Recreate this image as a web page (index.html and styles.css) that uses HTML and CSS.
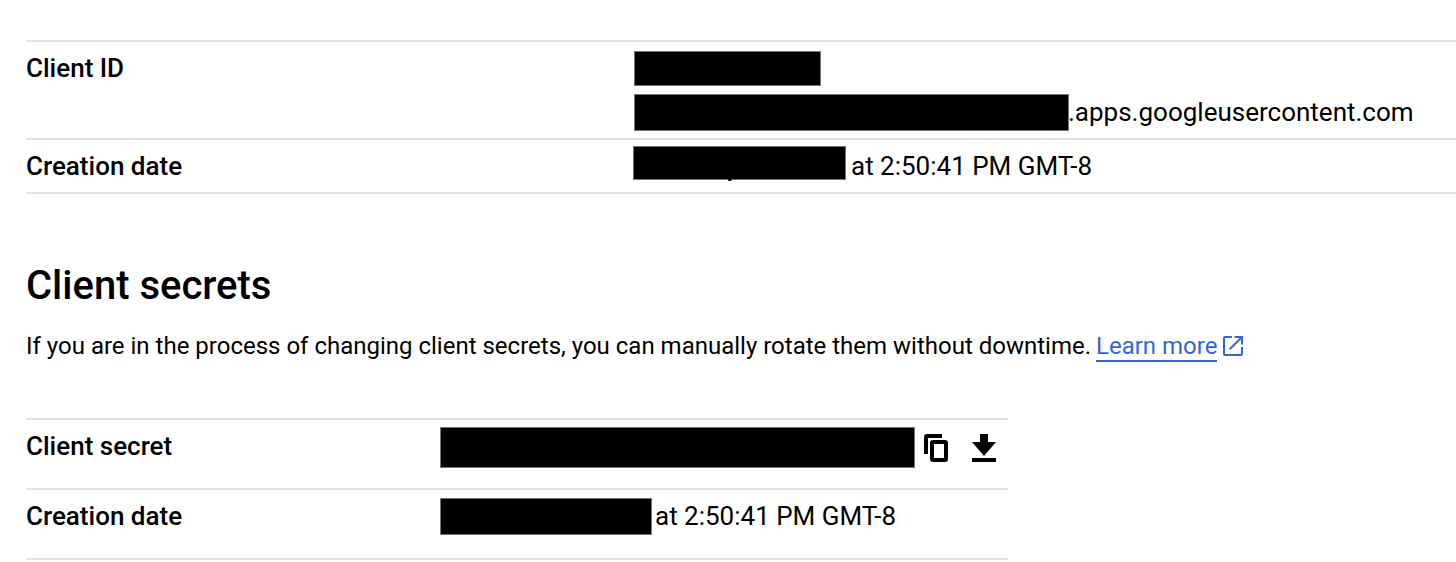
FILE: index.html
```html
<!DOCTYPE html>
<html lang="en">
<head>
<meta charset="utf-8">
<title>Client secrets</title>
<link rel="stylesheet" href="styles.css">
</head>
<body>
<main class="page">
  <dl class="details">
    <div class="row">
      <dt class="label">Client ID</dt>
      <dd class="value">
        <div class="line"><span class="redacted redacted-id"></span></div>
        <div class="line"><span class="redacted redacted-host"></span><span class="domain">.apps.googleusercontent.com</span></div>
      </dd>
    </div>
    <div class="row">
      <dt class="label">Creation date</dt>
      <dd class="value">
        <div class="line"><span class="redacted redacted-created"></span><span class="time">at 2:50:41 PM GMT-8</span></div>
      </dd>
    </div>
  </dl>
  <h2 class="title">Client secrets</h2>
  <p class="description"><span class="sentence">If you are in the process of changing client secrets, you can manually rotate them without downtime.</span><a class="link" href="#">Learn more</a><svg class="external" width="20" height="20" viewBox="0 0 20 20"><path d="M9 1H2Q1 1 1 2V18Q1 19 2 19H18Q19 19 19 18V11M11.5 1H19V8.5M18.5 1.5L6.7 13.3" fill="none" stroke="#3367d6" stroke-width="2"/></svg></p>
  <dl class="details secrets">
    <div class="row">
      <dt class="label">Client secret</dt>
      <dd class="value">
        <div class="line"><span class="redacted redacted-secret"></span>
          <svg class="copy" width="24" height="28" viewBox="0 0 24 28"><path d="M2 20V3Q2 2 3 2H18" fill="none" stroke="#000" stroke-width="4"/><rect x="8" y="8" width="14" height="18" rx="1" fill="none" stroke="#000" stroke-width="4"/></svg>
          <svg class="download" width="24" height="28" viewBox="0 0 24 28"><path d="M8 0H16V8H24L12 22L0 8H8ZM0 24H24V28H0Z"/></svg>
        </div>
      </dd>
    </div>
    <div class="row">
      <dt class="label">Creation date</dt>
      <dd class="value">
        <div class="line"><span class="redacted redacted-secret-date"></span><span class="time">at 2:50:41 PM GMT-8</span></div>
      </dd>
    </div>
  </dl>
</main>
</body>
</html>
```
FILE: styles.css
```css
body {
  margin: 0;
  background: #fff;
  color: #000;
  font-family: Roboto, sans-serif;
  font-size: 26px;
  overflow: hidden;
}

.page {
  padding: 40px 0 0 26px;
}

.details {
  margin: 0;
  border-top: 2px solid #e0e0e0;
}

.row {
  display: grid;
  grid-template-columns: 608px 1fr;
  padding: 4px 0;
  border-bottom: 2px solid #e0e0e0;
  line-height: 44px;
}

.label {
  font-weight: 500;
}

.value {
  margin: 0;
}

.line {
  display: flex;
  height: 44px;
  white-space: nowrap;
}

.redacted {
  box-sizing: border-box;
  flex: none;
  border: 1px solid #757575;
  background: #000;
}

.redacted-id {
  width: 187px;
  height: 35px;
  margin-top: 5px;
}

.redacted-host {
  width: 435px;
  height: 37px;
  margin-top: 4px;
}

.domain {
  margin-left: -1px;
}

.redacted-created {
  position: relative;
  width: 213px;
  height: 34px;
  margin: 2px 5px 0 -1px;
}

/* Comma tail showing below the redaction bar */
.redacted-created::after {
  content: "";
  position: absolute;
  left: 94px;
  top: 32px;
  width: 4px;
  height: 2px;
  border-radius: 0 0 2px 1px;
  background: #000;
}

.title {
  margin: 66px 0 0;
  font-size: 40px;
  font-weight: 500;
  line-height: 52px;
}

.description {
  display: flex;
  margin: 20px 0 0;
  font-size: 24px;
  line-height: 28px;
  white-space: nowrap;
}

.link {
  height: 28px;
  margin-left: 5px;
  border-bottom: 2px solid #3367d6;
  color: #3367d6;
  text-decoration: none;
}

.external {
  margin: 4px 0 0 6px;
}

.secrets {
  width: 982px;
  margin-top: 56px;
}

.secrets .row {
  grid-template-columns: 414px 1fr;
  padding-bottom: 20px;
}

.redacted-secret {
  width: 475px;
  height: 41px;
  margin-top: 3px;
}

.redacted-secret-date {
  width: 212px;
  height: 37px;
  margin: 4px 3px 0 0;
}

.copy {
  margin: 10px 0 0 9px;
}

.download {
  margin: 10px 0 0 24px;
}
```
